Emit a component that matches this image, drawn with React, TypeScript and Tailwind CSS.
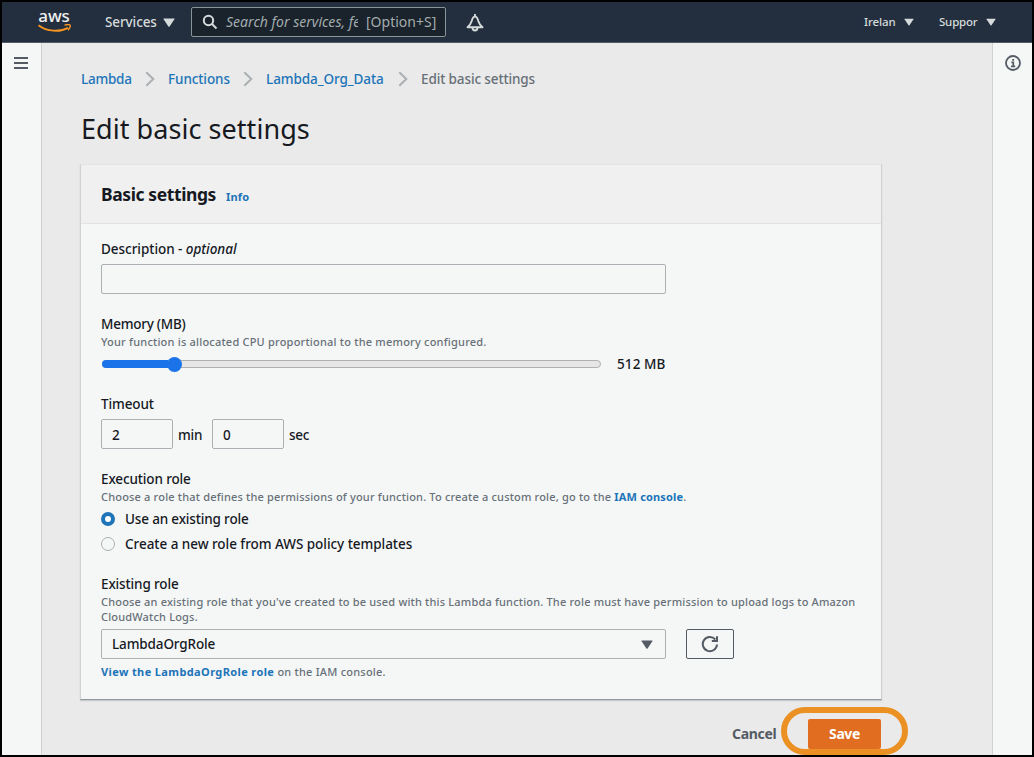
import React from "react";

const Caret = ({ className }: { className: string }) => (
  <svg viewBox="0 0 12 9" className={className} fill="currentColor">
    <path d="M1 0.5h10q.8 0 .4.7L6.6 8.4q-.6.8-1.200 0L.6 1.200Q.2.5 1 .5z" />
  </svg>
);

const Chevron = () => (
  <svg viewBox="0 0 10 16" className="h-4 w-2.5 shrink-0" fill="none" stroke="#aab0b3" strokeWidth="2">
    <path d="M1.300 1.200 8.300 8l-7 6.800" />
  </svg>
);

function TopBar() {
  return (
    <header className="flex h-[41px] shrink-0 items-center border-b border-[#545b64] bg-[#232f3e] text-[#d5dbdb]">
      <div className="-mt-[2px] ml-[35px] flex w-[36px] flex-col items-center">
        <span className="h-[15px] -translate-x-px text-[17px] font-medium leading-[12px] tracking-[-0.1px] text-[#f0f0f0]">aws</span>
        <svg viewBox="0 0 36 9" className="-mt-px h-[9px] w-[36px]" fill="none" stroke="#f79522">
          <path d="M1.500 1.200C10 7.800 23 8.300 31 3.800" strokeWidth="1.900" />
          <path d="M27.500 1.200c2.400-.8 4.700-.8 5.500-.2.600 1-.3 3.400-1.900 5.200" strokeWidth="1.400" />
        </svg>
      </div>
      <span className="ml-[32px] w-[52px] whitespace-nowrap text-[13.5px] font-medium leading-5 tracking-[-0.1px]">Services</span>
      <Caret className="ml-[6px] h-[9px] w-[12px]" />
      <div className="ml-[16px] flex h-[30px] w-[255px] items-center rounded-[2px] border border-[#879596] bg-[#1a222b] text-[14px] text-[#a2acad]">
        <svg viewBox="0 0 16 16" className="ml-[10px] h-4 w-4 shrink-0" fill="none" stroke="#d5dbdb" strokeWidth="2">
          <circle cx="6.500" cy="6.500" r="4.700" />
          <path d="m10 10 4.500 4.500" />
        </svg>
        <span className="ml-[8px] w-[132px] shrink-0 overflow-hidden whitespace-nowrap italic leading-5 tracking-[0.02px]">Search for services, fe</span>
        <span className="ml-[8px] whitespace-nowrap leading-5">[Option+S]</span>
      </div>
      <svg viewBox="0 0 18 18" className="ml-[20px] mt-[2px] h-[18px] w-[18px]" fill="none" stroke="#d5dbdb" strokeWidth="1.900">
        <path d="M9 0v2.500M1.500 13.200h15C13.800 11 13 9.500 12.300 7 11.600 4 10.700 2.600 9 2.600S6.400 4 5.700 7c-.7 2.500-1.500 4-4.200 6.200z" strokeLinejoin="round" />
        <path d="M6.500 13.500c0 4 5 4 5 0" />
      </svg>
      <span className="ml-[380px] w-[32px] whitespace-nowrap text-[11.5px] font-medium leading-5 tracking-[-0.1px]">Irelan</span>
      <Caret className="ml-[8px] h-[8px] w-[10px]" />
      <span className="ml-[25px] w-[40px] whitespace-nowrap text-[11.5px] font-medium leading-5 tracking-[-0.2px]">Suppor</span>
      <Caret className="ml-[7px] h-[8px] w-[10px]" />
    </header>
  );
}

const label = "text-[13.5px] font-medium leading-5 whitespace-nowrap text-[#16191f]";
const hint = "text-[11px] font-medium leading-[15px] whitespace-nowrap text-[#687078]";
const field = "h-[30px] rounded-[2px] border border-[#aab0b3] bg-[#f5f7f7]";

function SettingsCard() {
  return (
    <section className="h-[536px] w-[802px] border border-t-[#e4e4e4] border-x-[#cfd2d3] border-b-[#90989c] bg-[#f5f7f7] shadow-[0_1px_1px_rgba(0,28,36,0.15)]">
      <div className="flex h-[59px] items-center border-b border-[#e1e3e4] bg-[#f0f0f0] pl-[20px]">
        <h2 className="w-[115px] whitespace-nowrap text-[17.5px] font-bold leading-6 tracking-[-0.4px] text-[#16191f]">Basic settings</h2>
        <a className="ml-[10px] mt-[5px] text-[11px] font-bold leading-4 tracking-[0.2px] text-[#2074b8]">Info</a>
      </div>
      <div className="flex flex-col px-[20px] pt-[15px]">
        <label className={`tracking-[-0.04px] ${label}`}>
          Description - <i>optional</i>
        </label>
        <div className={`mt-[5px] w-[565px] ${field}`} />

        <div className={`mt-[20px] tracking-[-0.25px] ${label}`}>Memory (MB)</div>
        <div className={`tracking-[0.21px] ${hint}`}>Your function is allocated CPU proportional to the memory configured.</div>
        <div className="mt-[5px] flex h-5 items-center">
          <div className="ml-px flex h-[8px] w-[499px] items-center rounded-full border border-[#b0b0b0] bg-[#e6e6e6]">
            <div className="-ml-px h-[8px] w-[66px] rounded-l-full bg-[#1a73e8]" />
            <div className="-ml-px h-[15px] w-[15px] shrink-0 rounded-full bg-[#1a73e8]" />
          </div>
          <span className={`ml-[16px] tracking-[0.1px] ${label}`}>512 MB</span>
        </div>

        <div className={`mt-[20px] tracking-[-0.12px] ${label}`}>Timeout</div>
        <div className="mt-[5px] flex items-center">
          <div className={`flex w-[72px] items-center pl-[10px] pt-[2px] ${field} ${label}`}>2</div>
          <span className={`ml-[5px] w-[34px] pt-[2px] tracking-[-0.2px] ${label}`}>min</span>
          <div className={`flex w-[72px] items-center pl-[10px] pt-[2px] ${field} ${label}`}>0</div>
          <span className={`ml-[5px] pt-[2px] tracking-[-0.3px] ${label}`}>sec</span>
        </div>

        <div className={`mt-[20px] tracking-[-0.13px] ${label}`}>Execution role</div>
        <div className={`tracking-[0.18px] ${hint}`}>
          Choose a role that defines the permissions of your function. To create a custom role, go to the{" "}
          <b className="text-[#2074b8]">IAM console</b>.
        </div>
        <div className="mt-[5px] flex h-5 items-center gap-[10px]">
          <span className="h-[14px] w-[14px] rounded-full border-[4px] border-[#2074b8] bg-white" />
          <span className={`tracking-[-0.16px] ${label}`}>Use an existing role</span>
        </div>
        <div className="mt-[5px] flex h-5 items-center gap-[10px]">
          <span className="h-[14px] w-[14px] rounded-full border border-[#aab0b3]" />
          <span className={`tracking-[-0.04px] ${label}`}>Create a new role from AWS policy templates</span>
        </div>

        <div className={`mt-[20px] tracking-[-0.13px] ${label}`}>Existing role</div>
        <div className={`tracking-[0.18px] ${hint}`}>
          Choose an existing role that you've created to be used with this Lambda function. The role must have permission to upload logs to Amazon
          <br />
          CloudWatch Logs.
        </div>
        <div className="mt-[5px] flex">
          <div className={`flex w-[565px] items-center justify-between pl-[10px] pr-[12px] ${field}`}>
            <span className={`tracking-[-0.13px] ${label}`}>LambdaOrgRole</span>
            <Caret className="h-[9px] w-[12px] text-[#545b64]" />
          </div>
          <button className="ml-[20px] flex h-[30px] w-[48px] items-center justify-center rounded-[2px] border border-[#545b64]">
            <svg viewBox="0 0 18 18" className="h-[18px] w-[18px]" fill="none" stroke="#545b64" strokeWidth="2">
              <path d="M16 9.500A7.100 7.100 0 1 1 14.300 4.500" />
              <path d="M16 1.200V6h-5.200" />
            </svg>
          </button>
        </div>
        <div className={`mt-[5px] tracking-[0.22px] ${hint}`}>
          <b className="tracking-[0.38px] text-[#2074b8]">View the LambdaOrgRole role</b> on the IAM console.
        </div>
      </div>
    </section>
  );
}

export default function App() {
  return (
    <div className="flex h-[757px] w-[1034px] flex-col overflow-hidden border-2 border-black bg-[#eaeaea] font-['Noto_Sans','Open_Sans',sans-serif]">
      <TopBar />
      <div className="flex min-h-0 flex-1">
        <aside className="w-[40px] shrink-0 border-r border-[#cfd2d3] bg-[#f5f7f7]">
          <div className="ml-[12px] mt-[14px] flex w-[14px] flex-col gap-[3px]">
            <i className="h-[2px] bg-[#545b64]" />
            <i className="h-[2px] bg-[#545b64]" />
            <i className="h-[2px] bg-[#545b64]" />
          </div>
        </aside>
        <main className="flex min-w-0 flex-1 flex-col pl-[38px]">
          <nav className="ml-px mt-[26px] flex h-5 shrink-0 items-center whitespace-nowrap text-[13.500px] font-medium leading-5 text-[#2074b8]">
            <a className="w-[51px] tracking-[-0.25px]">Lambda</a>
            <span className="ml-[13px] flex"><Chevron /></span>
            <a className="ml-[13px] w-[62px] tracking-[-0.1px]">Functions</a>
            <span className="ml-[13px] flex"><Chevron /></span>
            <a className="ml-[13px] w-[119px] tracking-[-0.08px]">Lambda_Org_Data</a>
            <span className="ml-[13px] flex"><Chevron /></span>
            <span className="ml-[13px] tracking-[-0.12px] text-[#687078]">Edit basic settings</span>
          </nav>
          <h1 className="ml-px mt-[22px] h-9 shrink-0 whitespace-nowrap text-[27px] leading-9 tracking-[0.05px] text-[#16191f]">Edit basic settings</h1>
          <div className="mt-[17px] shrink-0">
            <SettingsCard />
          </div>
          <div className="mt-[19px] flex h-[30px] w-[801px] shrink-0 items-center justify-end">
            <span className="w-[76px] whitespace-nowrap text-[14px] font-bold leading-5 tracking-[-0.3px] text-[#545b64]">Cancel</span>
            <div className="relative flex h-[30px] w-[73px] items-center justify-center rounded-[2px] bg-[#e06d20] text-[14px] font-bold leading-5 tracking-[-0.4px] text-white">
              Save
              <span className="absolute -left-[27px] -top-[12px] h-[48px] w-[127px] rounded-[24px] border-[6px] border-[#eb9023]" />
            </div>
          </div>
        </main>
        <aside className="w-[40px] shrink-0 border-l border-[#cfd2d3] bg-[#f5f7f7]">
          <svg viewBox="0 0 16 16" className="ml-[12px] mt-[12px] h-4 w-4" fill="none" stroke="#545b64">
            <circle cx="8" cy="8" r="7" strokeWidth="1.800" />
            <path d="M6.300 7.300H8.300V11.200M6 11.300h4.200M7.200 4.800h1.900" strokeWidth="1.700" />
          </svg>
        </aside>
      </div>
    </div>
  );
}
